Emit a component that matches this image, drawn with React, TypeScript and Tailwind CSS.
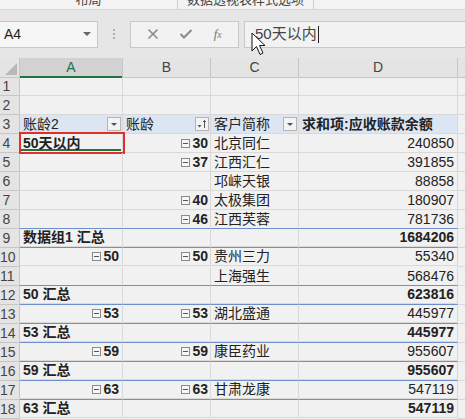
import React from "react";

const FONT = { fontFamily: '"Liberation Sans","Noto Sans CJK SC",sans-serif' };

function Minus() {
  return (
    <span className="inline-flex items-center justify-center w-[9px] h-[9px] border border-[#8a8a8a] mr-[2px] bg-[#f7f7f7]">
      <span className="block w-[5px] h-px bg-[#555]" />
    </span>
  );
}

function DropBtn({ sort }: { sort?: boolean }) {
  return (
    <span className="flex items-center justify-center w-[14px] h-[14px] border border-[#b5b5b5] bg-[#f3f3f3]">
      {sort ? (
        <svg width="12" height="12" viewBox="0 0 12 12">
          <path d="M1.5 7 L5.5 7 L3.5 9.5 Z" fill="#555" />
          <path d="M8.5 10 V2.5 M7 4 L8.5 2.5 L10 4" stroke="#555" strokeWidth="1" fill="none" />
        </svg>
      ) : (
        <svg width="10" height="10" viewBox="0 0 10 10">
          <path d="M2 4 L8 4 L5 7 Z" fill="#555" />
        </svg>
      )}
    </span>
  );
}

type Row = {
  a?: React.ReactNode;
  aRight?: string;
  b?: string;
  c?: string;
  d?: string;
  bold?: boolean;
  topBlue?: boolean;
};

const rows: Row[] = [
  {},
  {},
  { a: "hdr" },
  { a: "50天以内", b: "30", c: "北京同仁", d: "240850" },
  { b: "37", c: "江西汇仁", d: "391855" },
  { c: "邛崃天银", d: "88858" },
  { b: "40", c: "太极集团", d: "180907" },
  { b: "46", c: "江西芙蓉", d: "781736" },
  { a: "数据组1 汇总", d: "1684206", bold: true, topBlue: true },
  { aRight: "50", b: "50", c: "贵州三力", d: "55340", topBlue: true },
  { c: "上海强生", d: "568476" },
  { a: "50 汇总", d: "623816", bold: true, topBlue: true },
  { aRight: "53", b: "53", c: "湖北盛通", d: "445977", topBlue: true },
  { a: "53 汇总", d: "445977", bold: true, topBlue: true },
  { aRight: "59", b: "59", c: "康臣药业", d: "955607", topBlue: true },
  { a: "59 汇总", d: "955607", bold: true, topBlue: true },
  { aRight: "63", b: "63", c: "甘肃龙康", d: "547119", topBlue: true },
  { a: "63 汇总", d: "547119", bold: true, topBlue: true },
];

const GRID = "grid grid-cols-[20px_103px_88px_88px_159px_1fr]";

export default function App() {
  return (
    <div className="w-[465px] h-[419px] overflow-hidden bg-[#f1f1f1] text-[#222]" style={FONT}>
      {/* ribbon remnant */}
      <div className="h-[10px] bg-[#f3f3f3] border-b border-[#d6d6d6] flex overflow-hidden">
        <div className="w-[178px] border-r border-[#d0d0d0] flex justify-center">
          <span className="text-[13px] leading-[13px] -mt-[7px] text-[#444]">布局</span>
        </div>
        <div className="w-[136px] border-r border-[#d0d0d0] flex justify-center">
          <span className="text-[13px] leading-[13px] -mt-[7px] text-[#444]">数据透视表样式选项</span>
        </div>
      </div>

      {/* formula bar */}
      <div className="h-[48px] bg-[#e6e6e6] flex items-center relative">
        <div className="w-[98px] h-[27px] bg-[#f6f6f6] border border-[#c8c8c8] border-l-0 flex items-center justify-between pl-[4px] pr-[6px]">
          <span className="text-[14px]">A4</span>
          <svg width="8" height="6" viewBox="0 0 8 6"><path d="M0 1 L8 1 L4 5 Z" fill="#666" /></svg>
        </div>
        <div className="w-[32px] flex flex-col items-center gap-[2px]">
          <span className="w-[2px] h-[2px] bg-[#b0b0b0]" />
          <span className="w-[2px] h-[2px] bg-[#b0b0b0]" />
          <span className="w-[2px] h-[2px] bg-[#b0b0b0]" />
        </div>
        <div className="w-[109px] h-[27px] bg-[#f2f2f2] border border-[#c8c8c8] flex items-center justify-around px-[6px]">
          <svg width="12" height="12" viewBox="0 0 12 12"><path d="M1.5 1.5 L10.5 10.5 M10.5 1.5 L1.5 10.5" stroke="#8a8a8a" strokeWidth="1.6" /></svg>
          <svg width="14" height="12" viewBox="0 0 14 12"><path d="M1.5 6 L5 9.5 L12.5 2" stroke="#8a8a8a" strokeWidth="2" fill="none" /></svg>
          <span className="text-[13px] italic text-[#777]" style={{ fontFamily: '"Liberation Serif",serif' }}>f<span className="text-[10px]">x</span></span>
        </div>
        <div className="ml-[5px] flex-1 h-[27px] bg-[#f2f2f2] border border-[#c8c8c8] border-r-0 flex items-center pl-[10px]">
          <span className="text-[15px] text-[#444]">50天以内</span>
          <span className="w-px h-[17px] bg-[#222] ml-[1px]" />
        </div>
        {/* mouse pointer */}
        <svg className="absolute left-[251px] top-[22px]" width="16" height="26" viewBox="0 0 16 26">
          <path d="M1 1 L1 19 L5.5 14.5 L9 22.5 L12 21 L8.5 13.5 L14 13.5 Z" fill="#fff" stroke="#111" strokeWidth="1" />
        </svg>
      </div>

      {/* column headers */}
      <div className={`${GRID} h-[19px] bg-[#e4e4e4] text-[14px] leading-[18px] text-[#444]`}>
        <div className="border-r border-b border-[#c6c6c6] relative">
          <svg className="absolute right-[2px] bottom-[2px]" width="12" height="12" viewBox="0 0 12 12"><path d="M12 0 L12 12 L0 12 Z" fill="#b8b8b8" /></svg>
        </div>
        <div className="bg-[#d2d2d2] border-r border-[#c6c6c6] border-b-2 border-b-[#217346] text-center text-[#217346]">A</div>
        <div className="border-r border-b border-[#c6c6c6] text-center">B</div>
        <div className="border-r border-b border-[#c6c6c6] text-center">C</div>
        <div className="border-r border-b border-[#c6c6c6] text-center">D</div>
        <div className="border-b border-[#c6c6c6]" />
      </div>

      {/* rows */}
      {rows.map((r, i) => {
        const n = i + 1;
        const hdr = r.a === "hdr";
        const cellBase = "h-[19px] border-r border-b border-[#d9d9d9] flex items-center overflow-visible whitespace-nowrap";
        const blue = r.topBlue ? "border-t border-t-[#6f8fcc] -mt-px" : "";
        const bg = hdr ? "bg-[#dce6f2]" : "";
        const aAlign = hdr ? "justify-between pl-[3px] pr-[1px]" : r.aRight ? "justify-end pr-[3px]" : "pl-[3px]";
        const bAlign = hdr ? "justify-between pl-[3px] pr-[1px]" : "justify-end pr-[2px]";
        const cAlign = hdr ? "justify-between pl-[3px] pr-[1px]" : "pl-[3px]";
        const dAlign = hdr ? "pl-[3px] font-bold" : "justify-end pr-[3px]";
        return (
          <div key={n} className={`${GRID} h-[19px] text-[14px]`}>
            <div className="h-[19px] bg-[#e4e4e4] border-r border-b border-[#c6c6c6] flex items-center">
              <span className="w-[13px] text-center text-[14px] text-[#444] whitespace-nowrap">{n}</span>
            </div>
            {/* A */}
            <div className={`${cellBase} ${bg} ${blue} relative ${aAlign}`}>
              {hdr ? (
                <>
                  <span>账龄2</span>
                  <DropBtn />
                </>
              ) : r.aRight ? (
                <span className="flex items-center font-bold"><Minus />{r.aRight}</span>
              ) : r.a ? (
                <span className="font-bold relative z-10">{r.a}</span>
              ) : null}
              {n === 4 && (
                <>
                  <span className="absolute left-[1px] right-[1px] bottom-[1px] h-[2px] bg-[#217346]" />
                  <span className="absolute -left-[1px] -top-[2px] w-[106px] h-[22px] border-2 border-[#e0302a]" />
                </>
              )}
            </div>
            {/* B */}
            <div className={`${cellBase} ${bg} ${blue} ${bAlign}`}>
              {hdr ? (
                <>
                  <span>账龄</span>
                  <DropBtn sort />
                </>
              ) : r.b ? (
                <span className="flex items-center font-bold"><Minus />{r.b}</span>
              ) : null}
            </div>
            {/* C */}
            <div className={`${cellBase} ${bg} ${blue} ${cAlign}`}>
              {hdr ? (
                <>
                  <span>客户简称</span>
                  <DropBtn />
                </>
              ) : (
                <span>{r.c}</span>
              )}
            </div>
            {/* D */}
            <div className={`${cellBase} ${bg} ${blue} ${dAlign}`}>
              {hdr ? <span>求和项:应收账款余额</span> : <span className={r.bold ? "font-bold" : ""}>{r.d}</span>}
            </div>
            <div className="h-[19px] border-b border-[#d9d9d9]" />
          </div>
        );
      })}
    </div>
  );
}
